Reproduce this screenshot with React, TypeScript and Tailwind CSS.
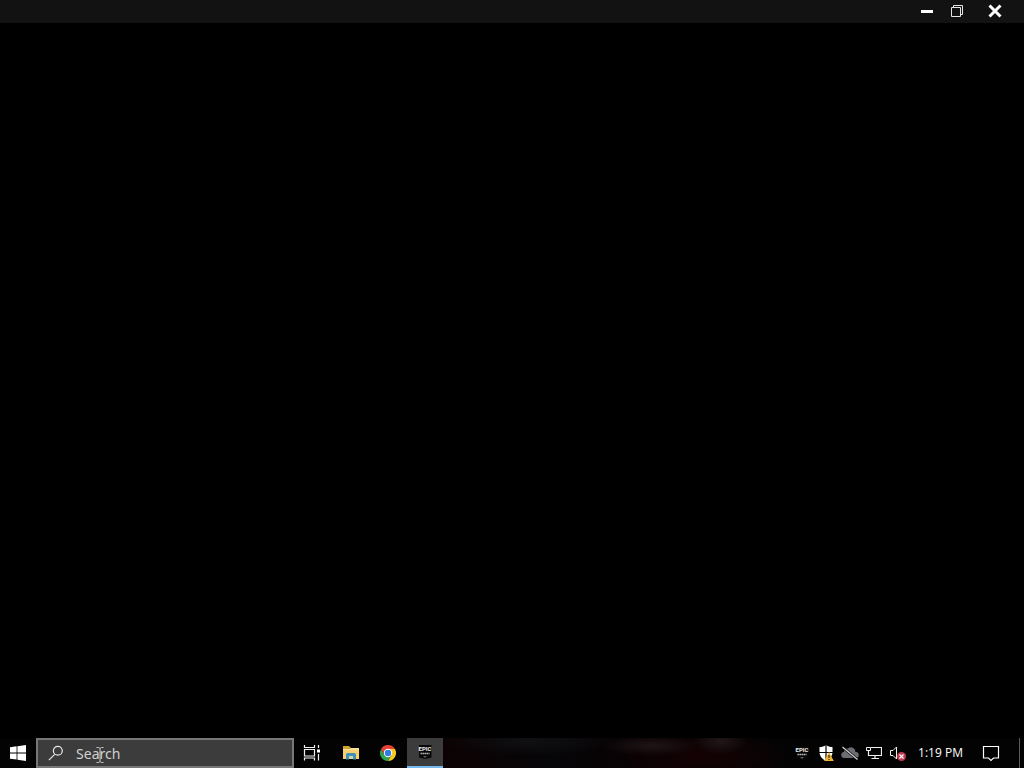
import type { ReactNode } from "react";

function EpicMark() {
  return (
    <svg width="16" height="16" viewBox="0 0 16 16" aria-hidden="true">
      <path d="M2 1h12.500v12.500l-6 1.500L2 13.500z" fill="#080808" />
      <text
        x="8"
        y="7"
        textAnchor="middle"
        fontFamily="Roboto, 'Liberation Sans', sans-serif"
        fontSize="6"
        fontWeight="700"
        fill="#f0f0f0"
      >
        EPIC
      </text>
      <path d="M3.500 9.500h9" stroke="#b4b4b4" strokeWidth="1.500" strokeDasharray="1.600 .4" />
      <path d="M6 12.500h4l-2 1z" fill="#b0b0b0" />
    </svg>
  );
}

function WindowsLogo() {
  return (
    <svg width="16" height="16" viewBox="0 0 16 16" fill="#fff" aria-hidden="true">
      <path d="M0 2.3 6.6 1.3V7.5H0zM7.4 1.2 16 0v7.5H7.4zM0 8.4h6.6v6.2L0 13.7zM7.4 8.4H16V16l-8.6-1.2z" />
    </svg>
  );
}

function TaskViewIcon() {
  return (
    <svg width="18" height="16" viewBox="0 0 18 16" fill="none" stroke="#f0f0f0" strokeWidth="1.2" aria-hidden="true">
      <path d="M1.500 0v2.500h10V0M1.500 15.500V13h10v2.500M1.500 4.500h10v6.500h-10zM15.500 0v3M15.500 9v6.500" />
      <path d="M14 4.500h3v3h-3z" fill="#fff" stroke="none" />
    </svg>
  );
}

function FolderIcon() {
  return (
    <svg width="16" height="16" viewBox="0 0 16 16" aria-hidden="true">
      <path d="M0 1h6l2 2h6v4H0z" fill="#c9a52f" />
      <path d="M0 4h16v10H0z" fill="#f5d06c" />
      <path d="M0 4h7l1-1h8v2H0z" fill="#fae09a" />
      <path d="M3 14.500V9.500Q3 8 4.500 8h7Q13 8 13 9.500v5h-3V11H6v3.500z" fill="#3f8fb8" />
      <path d="M6 11h4v3H6z" fill="#d5d5a4" />
    </svg>
  );
}

function ChromeIcon() {
  return (
    <svg width="16" height="16" viewBox="0 0 16 16" aria-hidden="true">
      <path d="M8 4h6.930A8 8 0 0 1 8 16l3.460-6z" fill="#fbc916" />
      <path d="M1.070 4A8 8 0 0 0 8 16l3.460-6H8L4.540 10z" fill="#2da350" />
      <path d="M8 4h6.930A8 8 0 0 0 1.070 4l3.470 6L8 8z" fill="#e34234" />
      <circle cx="8" cy="8" r="4.200" fill="#fff" />
      <circle cx="8" cy="8" r="3.200" fill="#2f7de9" />
    </svg>
  );
}

function SecurityIcon() {
  return (
    <svg width="16" height="16" viewBox="0 0 16 16" aria-hidden="true">
      <path d="M8 0c2 1.500 4 2 6.500 2v5c0 4-2.500 7-6.500 9-4-2-6.500-5-6.500-9V2C4 2 6 1.500 8 0z" fill="#fff" />
      <path d="M8 0v16M1 7.500h14" stroke="#050508" strokeWidth="1.200" />
      <path d="m11 7 4.800 9H6.200z" fill="#f0b43a" />
      <path d="M11 10v3M11 14v1" stroke="#3a2a08" strokeWidth="1.200" />
    </svg>
  );
}

function CloudOffIcon() {
  return (
    <svg width="18" height="16" viewBox="0 0 18 16" aria-hidden="true">
      <path d="M3.500 13a3 3 0 0 1-.5-6A3.500 3.500 0 0 1 7 3.500a4.500 4.500 0 0 1 7.500 3.500A3 3 0 0 1 15 13z" fill="#6c6c72" />
      <path d="m1.500 2 15 12.500" stroke="#050508" strokeWidth="2.400" />
      <path d="m1.500 2 15 12.500" stroke="#d5d5d5" strokeWidth="1.200" />
    </svg>
  );
}

function NetworkIcon() {
  return (
    <svg width="16" height="16" viewBox="0 0 16 16" fill="none" stroke="#f0f0f0" aria-hidden="true">
      <path d="M5 2.500h10.500v8H2.500V6M9 10.500v3M5.500 13.500H13" strokeWidth="1.200" />
      <path d="M.5 2.500h4v3h-4zM2.500 5.500V8" />
    </svg>
  );
}

function VolumeMutedIcon() {
  return (
    <svg width="18" height="16" viewBox="0 0 18 16" aria-hidden="true">
      <path d="M1.500 5.500H4l3.500-3.500v12L4 10.500H1.500z" fill="none" stroke="#f0f0f0" />
      <circle cx="12.500" cy="11.500" r="4.500" fill="#c23a4e" />
      <path d="m10.500 9.500 4 4m0-4-4 4" stroke="#fff" strokeWidth="1.200" />
    </svg>
  );
}

const pinned = [
  { label: "File Explorer", icon: <FolderIcon />, active: false },
  { label: "Google Chrome", icon: <ChromeIcon />, active: false },
  { label: "Epic Games Launcher", icon: <EpicMark />, active: true },
];

const tray = [
  { label: "Epic Games", icon: <EpicMark /> },
  { label: "Windows Security", icon: <SecurityIcon /> },
  { label: "OneDrive", icon: <CloudOffIcon /> },
  { label: "Network", icon: <NetworkIcon /> },
  { label: "Volume", icon: <VolumeMutedIcon /> },
];

function BarButton({ label, className, children }: { label: string; className: string; children: ReactNode }) {
  return (
    <button type="button" aria-label={label} className={`flex shrink-0 items-center justify-center ${className}`}>
      {children}
    </button>
  );
}

function TitleBar() {
  return (
    <header className="flex h-[23px] items-stretch justify-end bg-[#121212] pr-[9px] pb-0.5">
      <BarButton label="Minimize" className="w-7">
        <svg width="12" height="12" viewBox="0 0 12 12" aria-hidden="true">
          <path d="M0 6.500h12" stroke="#fff" strokeWidth="3" />
        </svg>
      </BarButton>
      <BarButton label="Restore" className="w-8">
        <svg width="12" height="12" viewBox="0 0 12 12" fill="none" stroke="#e8e8e8" aria-hidden="true">
          <path d="M.5 2.500h9v9h-9zM2.500 2.500v-2h9v9h-2" />
        </svg>
      </BarButton>
      <BarButton label="Close" className="ml-0.5 w-10">
        <svg width="14" height="14" viewBox="0 0 14 14" aria-hidden="true">
          <path d="m1.500 1.500 11 11m0-11-11 11" stroke="#fff" strokeWidth="3" />
        </svg>
      </BarButton>
    </header>
  );
}

function SearchBox() {
  return (
    <label className="relative flex w-[258px] shrink-0 items-center border-2 border-[#777777] bg-[#3c3c3c] pl-2.5">
      <svg width="18" height="18" viewBox="0 0 18 18" fill="none" stroke="#e4e4e4" strokeWidth="1.4" aria-hidden="true">
        <circle cx="11" cy="6.500" r="5" />
        <path d="M7.500 10.500 1 17" />
      </svg>
      <input
        type="text"
        aria-label="Search"
        placeholder="Search"
        className="ml-2.5 w-full min-w-0 bg-transparent pt-px pl-0.5 text-sm text-white outline-none placeholder:text-[#d0d0d0]"
      />
      {/* text cursor hovering over the field */}
      <svg
        className="pointer-events-none absolute top-[7px] left-[58px]"
        width="8"
        height="16"
        viewBox="0 0 8 16"
        fill="none"
        stroke="#c8c8c8"
        aria-hidden="true"
      >
        <path d="M.5.5h2L4 1.500 5.500.5h2M4 1.500v13M.5 15.500h2L4 14.500l1.500 1h2" />
      </svg>
    </label>
  );
}

function Taskbar() {
  return (
    <footer className="flex h-[30px] items-stretch bg-[#030303] text-white">
      <BarButton label="Start" className="w-9">
        <WindowsLogo />
      </BarButton>
      <SearchBox />
      <BarButton label="Task View" className="mr-[3px] w-9">
        <TaskViewIcon />
      </BarButton>
      <div className="flex gap-px">
        {pinned.map((app) => (
          <BarButton
            key={app.label}
            label={app.label}
            className={app.active ? "w-9 border-b-2 border-[#76b9ed] bg-[#3c3c3c]" : "w-9"}
          >
            {app.icon}
          </BarButton>
        ))}
      </div>
      <div className="flex-1 bg-[radial-gradient(ellipse_14%_35%_at_60%_25%,#1f1517,transparent),radial-gradient(ellipse_8%_45%_at_80%_10%,#211719,transparent),radial-gradient(ellipse_25%_90%_at_75%_60%,#150204,transparent),radial-gradient(ellipse_25%_50%_at_25%_10%,#101013,transparent),linear-gradient(90deg,#0c0203,#060507_30%,#080103_60%,#030303)]" />
      <div className="flex">
        {tray.map((item) => (
          <BarButton key={item.label} label={item.label} className="w-6">
            {item.icon}
          </BarButton>
        ))}
      </div>
      <button type="button" className="w-[61px] shrink-0 text-center font-['Open_Sans','Noto_Sans',sans-serif] text-xs">
        1:19 PM
      </button>
      <BarButton label="Notifications" className="mr-2 w-10">
        <svg width="18" height="18" viewBox="0 0 18 18" fill="none" stroke="#fff" strokeWidth="1.2" aria-hidden="true">
          <path d="M1.500 2.500h15v11.500h-5L9 16.500 6.500 14h-5z" />
        </svg>
      </BarButton>
      <button type="button" aria-label="Show desktop" className="w-[5px] shrink-0 border-l border-[#5a5a60]" />
    </footer>
  );
}

export default function App() {
  return (
    <div className="flex min-h-screen flex-col bg-black font-['Noto_Sans','Open_Sans',sans-serif]">
      <TitleBar />
      <main className="flex-1" />
      <Taskbar />
    </div>
  );
}
